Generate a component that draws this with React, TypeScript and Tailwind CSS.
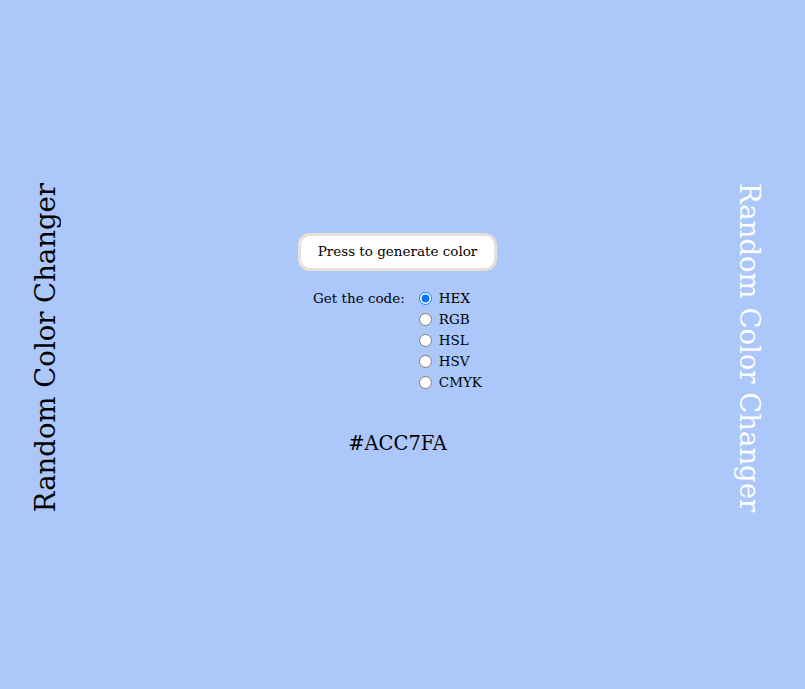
import { useState } from 'react';

const formats = ['HEX', 'RGB', 'HSL', 'HSV', 'CMYK'];

const App = () => {
	const [format, setFormat] = useState<string>('HEX');
	return (
		<div
			className="flex h-screen w-full items-center justify-between bg-[#ACC7FA] pl-[29px] pr-[39px] text-black"
			style={{ fontFamily: '"DejaVu Serif", serif' }}
		>
			<h1 className="mt-[6px] rotate-180 text-[27.5px] font-normal leading-[33px] [writing-mode:vertical-rl]">
				Random Color Changer
			</h1>
			<div className="mb-[2px] flex flex-col items-center">
				<button className="h-[38px] w-[199px] rounded-[12px] border-[3px] border-[#e8e1db] bg-white text-[13.5px]">
					Press to generate color
				</button>
				<div className="mt-[17px] flex items-start text-[13.5px]">
					<span className="mr-[7px] leading-[21px]">Get the code:</span>
					<div className="flex flex-col">
						{formats.map((f) => (
							<label key={f} className="flex h-[21px] items-center">
								<input
									type="radio"
									name="format"
									checked={format === f}
									onChange={() => setFormat(f)}
									className="m-0 ml-[7px] mr-[7px] h-[13px] w-[13px]"
								/>
								{f}
							</label>
						))}
					</div>
				</div>
				<div className="mt-[40px] text-[19.5px] leading-[22px]">#ACC7FA</div>
			</div>
			<h1 className="mt-[6px] text-[27.5px] font-normal leading-[33px] text-white [writing-mode:vertical-rl]">
				Random Color Changer
			</h1>
		</div>
	);
};

export default App;
